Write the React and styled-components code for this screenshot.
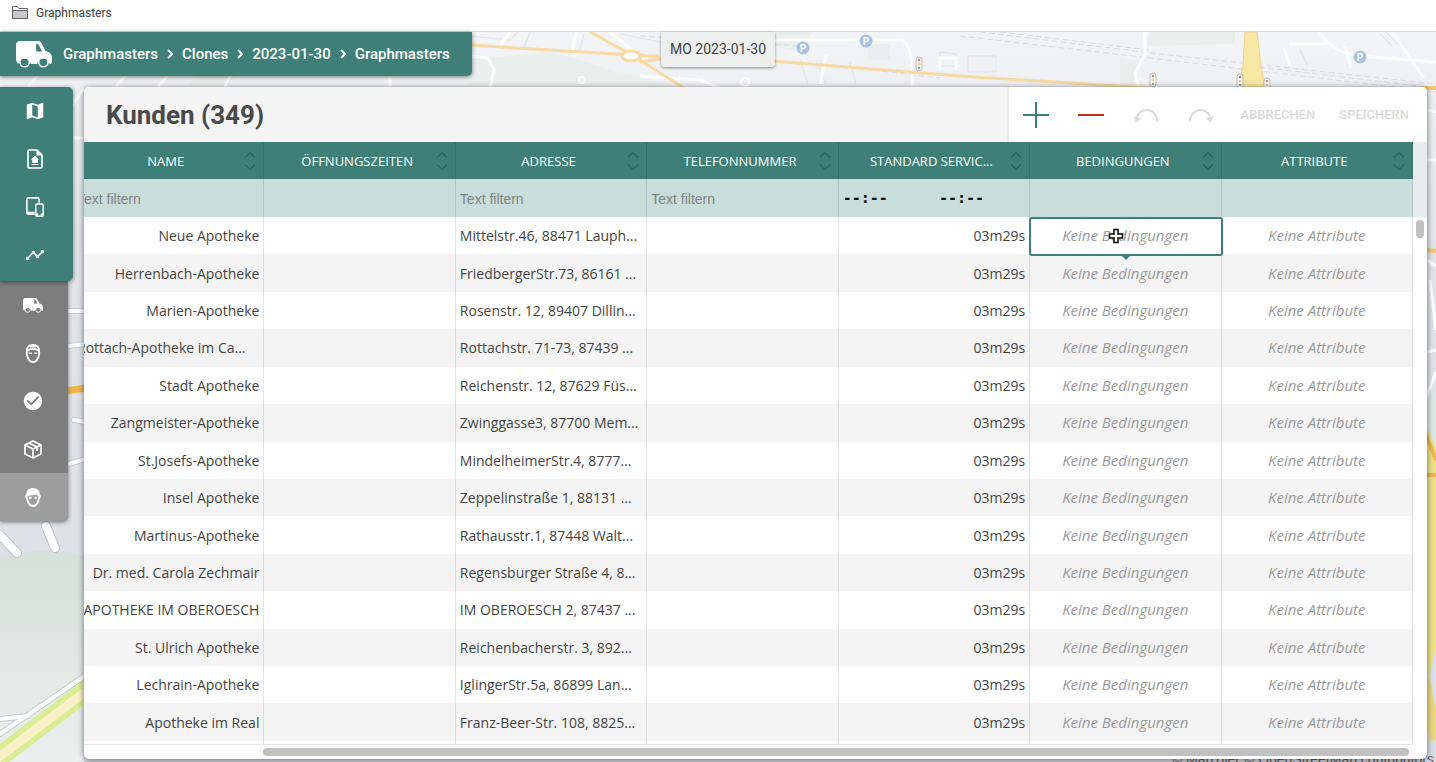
import React from 'react';
import styled, {createGlobalStyle, ThemeProvider} from 'styled-components';
import {MdCheckCircle, MdMap, MdTimeline} from 'react-icons/md';

const theme = {
	primary: '#3e8077',
	primaryLight: '#c9dedb',
	primaryDark: '#2c665e',
	danger: '#cf2a1e',
	text: '#444',
	muted: '#9b9b9b',
	disabled: '#dadada',
	stripe: '#f4f4f4',
	line: 'rgba(0, 0, 0, .1)',
	thumb: '#c1c1c1',
	roboto: 'Roboto, "Liberation Sans", sans-serif',
	openSans: '"Open Sans", "Noto Sans", sans-serif'
};

const GlobalStyle = createGlobalStyle`
	* {
		box-sizing: border-box;
	}

	body {
		margin: 0;
		font-family: ${theme.roboto};
		color: ${theme.text};
	}

	button, input {
		margin: 0;
		padding: 0;
		border: 0;
		background: none;
		font: inherit;
		color: inherit;
	}
`;

const Page = styled.div`
	display: flex;
	flex-direction: column;
	height: 100vh;
	overflow: hidden;
`;

const BookmarkBar = styled.nav`
	display: flex;
	align-items: center;
	height: 32px;
	padding: 0 12px 6px;
	background: #fff;
	border-bottom: 1px solid #d5dcda;
`;

const Bookmark = styled.a`
	display: flex;
	align-items: center;
	gap: 8px;
	font-size: 12px;
	color: #3c4043;
	text-decoration: none;
`;

const Workspace = styled.div`
	position: relative;
	flex: 1;
	min-height: 0;
	display: flex;
	flex-direction: column;
	gap: 11px;
	isolation: isolate;
`;

const MapCanvas = styled.svg`
	position: absolute;
	inset: 0;
	z-index: -1;
	width: 100%;
	height: 100%;
`;

const MapCredits = styled.small`
	position: absolute;
	right: 2px;
	bottom: -5px;
	z-index: -1;
	font: 14px "Liberation Sans", sans-serif;
	color: #666;
`;

const TopBar = styled.header`
	display: grid;
	grid-template-columns: 1fr auto 1fr;
	align-items: start;
	height: 44px;
`;

const Breadcrumb = styled.nav`
	justify-self: start;
	display: flex;
	align-items: center;
	gap: 9px;
	height: 44px;
	padding: 0 22px 0 16px;
	border-radius: 0 0 5px 0;
	background: ${props => props.theme.primary};
	box-shadow: 0 1px 4px rgba(0, 0, 0, .5);
	color: #fff;
`;

const Crumb = styled.a`
	font-size: 15px;
	font-weight: 500;
	color: inherit;
	text-decoration: none;
`;

const HomeLink = styled.a`
	display: flex;
	margin-right: 2px;
	color: inherit;
`;

const DateChip = styled.button`
	height: 35px;
	padding: 0 9px 1px;
	border-radius: 0 0 4px 4px;
	background: rgba(237, 238, 238, .95);
	box-shadow: 0 1px 3px rgba(0, 0, 0, .45);
	font-size: 14px;
	color: #444;
`;

const Main = styled.div`
	flex: 1;
	min-height: 0;
	display: flex;
	align-items: flex-start;
	gap: 11px;
	padding: 0 9px 3px 0;
`;

const Sidebar = styled.aside`
	width: 73px;
`;

const NavGroup = styled.nav`
	position: relative;
	z-index: ${props => props.$primary ? 1 : 0};
	width: ${props => props.$primary ? '73px' : '68px'};
	padding-bottom: ${props => props.$primary ? '2px' : '0'};
	border-radius: ${props => props.$primary ? '0 5px 5px 0' : '0 0 5px 0'};
	overflow: hidden;
	background: ${props => props.$primary ? props.theme.primary : '#7d7d7d'};
	box-shadow: 0 1px 4px rgba(0, 0, 0, .5);
`;

const NavItem = styled.a`
	display: flex;
	align-items: center;
	justify-content: center;
	height: 48px;
	padding-right: 3px;
	background: ${props => props.$active ? '#9d9d9d' : 'transparent'};
	color: #fff;
`;

const Card = styled.section`
	flex: 1;
	min-width: 0;
	align-self: stretch;
	display: flex;
	flex-direction: column;
	border-radius: 5px;
	overflow: hidden;
	background: #fff;
	box-shadow: 0 1px 6px rgba(0, 0, 0, .55);
`;

const CardHeader = styled.div`
	display: flex;
	justify-content: space-between;
	height: 55px;
	background: ${props => props.theme.stripe};
`;

const Title = styled.h1`
	margin: 0;
	padding-left: 22px;
	font-size: 26px;
	line-height: 56px;
	font-weight: 700;
	color: #4a4a4a;
`;

const Toolbar = styled.div`
	display: flex;
	align-items: center;
	gap: 24px;
	padding: 0 18px 0 11px;
	border-left: 2px solid #ececec;
	background: #fff;
`;

const ToolGroup = styled.div`
	display: flex;
	gap: 23px;
`;

const ToolButton = styled.button`
	display: flex;
	align-items: center;
	justify-content: center;
	width: 32px;
	height: 32px;
	color: ${props => props.theme[props.$color]};
`;

const TextButton = styled.button`
	font-size: 13px;
	font-weight: 500;
	color: ${props => props.theme.disabled};
`;

const TableArea = styled.div`
	flex: 1;
	min-height: 0;
	display: grid;
	grid-template-columns: 1fr 14px;
	grid-template-rows: 1fr 14px;
`;

const TableViewport = styled.div`
	display: flex;
	justify-content: flex-end;
	min-width: 0;
	overflow: hidden;
	border-bottom: 1px solid #e8e8e8;
`;

// wider than the viewport, so the first column is scrolled partly out of view
const Table = styled.table`
	flex: none;
	width: calc(100% + 11px);
	height: 100%;
	table-layout: fixed;
	border-collapse: separate;
	border-spacing: 0;
	font-family: ${props => props.theme.openSans};
	font-size: 14px;
`;

const HeadCell = styled.th`
	height: 37px;
	padding: 0;
	background: ${props => props.theme.primary};
	border-right: 1px solid ${props => props.theme.line};
	color: #fff;
`;

const SortButton = styled.button`
	display: flex;
	align-items: center;
	width: 100%;
	padding: 0 7px 0 14px;
	font-size: 13px;
	font-weight: 500;
`;

const SortLabel = styled.span`
	flex: 1;
	white-space: nowrap;
`;

const SortIcon = styled.svg`
	flex: none;
	color: ${props => props.theme.primaryDark};
`;

const FilterCell = styled.td`
	height: 38px;
	padding: 0 0 0 4px;
	background: ${props => props.theme.primaryLight};
	border-right: 1px solid ${props => props.theme.line};
`;

const FilterInput = styled.input`
	width: 100%;
	font-family: "Liberation Sans", Arial, sans-serif;
	font-size: 14px;
	outline: none;

	&::placeholder {
		color: #7d8483;
		opacity: 1;
	}
`;

const TimeRange = styled.div`
	display: grid;
	grid-template-columns: 1fr 1fr;
	gap: 6px;
`;

const TimeInput = styled(FilterInput)`
	font-family: "DejaVu Sans Mono", monospace;
	font-size: 15px;
	font-weight: 700;

	&::placeholder {
		color: #111;
	}
`;

const Row = styled.tr`
	background: #fff;

	&:nth-child(even) {
		background: ${props => props.theme.stripe};
	}
`;

const Cell = styled.td`
	position: relative;
	padding: 0 4px;
	border-right: 1px solid ${props => props.theme.line};
	text-align: ${props => props.$align || 'left'};
	white-space: nowrap;
`;

const EmptyCell = styled(Cell)`
	line-height: 19px;
	font-size: 15px;
	font-style: italic;
	text-align: center;
	color: ${props => props.theme.muted};
`;

const SpareCell = styled.td`
	height: 3px;
	padding: 0;
	border-right: 1px solid ${props => props.theme.line};
`;

const Selection = styled.span`
	position: absolute;
	inset: 0 -2px -2px -1px;
	z-index: 1;
	border: 2px solid ${props => props.theme.primary};
	border-radius: 3px;

	&::after {
		content: '';
		position: absolute;
		top: 100%;
		left: 50%;
		margin-left: -6px;
		border: 6px solid transparent;
		border-bottom-width: 0;
		border-top-color: ${props => props.theme.primary};
	}
`;

const Cursor = styled.svg`
	position: absolute;
	top: 50%;
	left: 50%;
	z-index: 2;
	margin: -8px 0 0 -17px;
`;

const VerticalTrack = styled.div`
	padding: 78px 3px 0;
	background: linear-gradient(#e9ecec 75px, #fff 75px);
`;

const VerticalThumb = styled.div`
	height: 18px;
	border-radius: 4px;
	background: ${props => props.theme.thumb};
`;

const HorizontalTrack = styled.div`
	padding: 3px 4px 3px 13.5%;
`;

const HorizontalThumb = styled.div`
	height: 8px;
	border-radius: 4px;
	background: ${props => props.theme.thumb};
`;

const VanIcon = ({size}) => (
	<svg width={size} height={Math.round(size * 0.75)} viewBox="0 0 36 27" fill="currentColor">
		<path fillRule="evenodd" d="M4 0h17.500c2 0 3.200.7 4.200 2.500L29.500 10c4 .7 6.500 3 6.500 7v4c0 1.200-.7 2-2 2h-.4a6.300 6.300 0 0 0-12.400 0h-6.400a6.300 6.300 0 0 0-12.400 0C1 22 0 20 0 17V4.500C0 1.500 1.500 0 4 0zM20.200 3v6.200c0 .8.400 1.200 1.200 1.200h4.800L22.500 3.600c-.3-.500-.7-.8-1.300-.8-.7 0-1 0-1 .2z"/>
		<circle cx="8.600" cy="21" r="4.700" fill="none" stroke="currentColor" strokeWidth="1.600"/>
		<circle cx="27.400" cy="21" r="4.700" fill="none" stroke="currentColor" strokeWidth="1.600"/>
	</svg>
);

const FolderIcon = () => (
	<svg width="16" height="13" viewBox="0 0 16 13" fill="none" stroke="#5f6368">
		<path d="M.5 12.500V.5h5l1.500 2h8.500v10z" fill="#fff"/>
		<path d="M.5 4.500h15v8H.5z" fill="#c8c8c8"/>
	</svg>
);

const DepotIcon = () => (
	<svg width="16" height="20" viewBox="0 0 16 20">
		<path d="M2.500 1h7.300L15 6.200v11.300c0 .9-.6 1.500-1.500 1.500h-11C1.600 19 1 18.400 1 17.500v-15C1 1.600 1.600 1 2.500 1z" fill="none" stroke="#fff" strokeWidth="1.700"/>
		<path d="M9.500 1v5.500H15z" fill="#fff"/>
		<path d="M8 6.800l4 3.700h-1.200V14H5.200v-3.500H4zM4.500 15h7v1h-7z" fill="#fff"/>
	</svg>
);

const DevicesIcon = () => (
	<svg width="18" height="20" viewBox="0 0 18 20" fill="none" stroke="#fff">
		<path d="M8.500 17.200H2.300c-.8 0-1.400-.6-1.400-1.400V2.200C.9 1.400 1.500.9 2.300.9h9.400c.8 0 1.400.5 1.400 1.300v3.500" strokeWidth="1.600"/>
		<path d="M1 15.800h7.500" strokeWidth="2.200"/>
		<rect x="9.800" y="7" width="7.400" height="12.200" rx="1.200" strokeWidth="1.500"/>
		<path d="M10 17.500h2.300m2.400 0H17" strokeWidth="2"/>
	</svg>
);

const DriverIcon = () => (
	<svg width="16" height="19" viewBox="0 0 16 19">
		<path d="M2.200 6.500C1.500 3 4 1 8 1s6.500 2 5.800 5.500c.5 1 .7 2.300.3 3.800C13.300 14.800 11 18 8 18s-5.300-3.200-6.100-7.700c-.4-1.500-.2-2.800.3-3.800z" fill="none" stroke="#fff" strokeWidth="1.900"/>
		<path d="M2 7c2-1.700 4-2.200 6-2.200S12 5.300 14 7" fill="none" stroke="#fff" strokeWidth="1.700"/>
		<path d="M5 2h6v1.500H5zM3.800 8.600h2.900V10H3.800zm5.500 0h2.900V10H9.300z" fill="#fff"/>
	</svg>
);

const CustomerIcon = () => (
	<svg width="16" height="19" viewBox="0 0 16 19">
		<path d="M2.200 6.500C2 2.700 4.500 1 8 1s6 1.700 5.800 5.500c1.100.7 1 2.800 0 4.500C13 15 11 18 8 18s-5-3-5.800-7c-1-1.700-1.100-3.800 0-4.500z" fill="none" stroke="#fff" strokeWidth="1.900"/>
		<path d="M2 8.500C1.500 3 4 1 8 1s6.500 2 6 7.500c-1.300-.3-2-1.200-2.300-2.200C9.500 7.500 5 7.300 2 8.500z" fill="#fff"/>
		<circle cx="5.300" cy="9.800" r="1.300" fill="#fff"/>
		<circle cx="10.700" cy="9.800" r="1.300" fill="#fff"/>
	</svg>
);

const PackageIcon = () => (
	<svg width="18" height="19" viewBox="0 0 18 19" fill="none" stroke="#fff" strokeWidth="1.700" strokeLinejoin="round">
		<path d="M9 1l8 4v9l-8 4-8-4V5z"/>
		<path d="M1 5l8 4 8-4M9 9v9M5 3l8 4v4"/>
	</svg>
);

const UndoIcon = ({flip}) => (
	<svg width="26" height="16" viewBox="0 0 26 16">
		<g transform={flip ? 'matrix(-1 0 0 1 26 0)' : undefined}>
			<path d="M4 9.500a10.400 10.400 0 0 1 20 4.500" fill="none" stroke="currentColor" strokeWidth="2"/>
			<path d="M.5 9l8 2.500L3 15.500z" fill="currentColor"/>
		</g>
	</svg>
);

const CrumbChevron = () => (
	<svg width="6" height="10" viewBox="0 0 6 10" fill="none" stroke="currentColor" strokeWidth="2">
		<path d="M1 1l4 4-4 4"/>
	</svg>
);

const parkings = [[803, 48], [866, 41], [1360, 57]];
const trafficLights = [[1153, 80], [1240, 81], [1267, 85], [919, 64]];

const CityMap = () => (
	<MapCanvas viewBox="0 32 1436 730" preserveAspectRatio="none" aria-hidden="true" fill="none">
		<defs>
			<linearGradient id="ground" x1="0" y1="0" x2="0" y2="1">
				<stop offset="0" stopColor="#f3f4f6"/>
				<stop offset=".3" stopColor="#e2e5ea"/>
				<stop offset="1" stopColor="#dadee5"/>
			</linearGradient>
			<linearGradient id="park" x1="0" y1="0" x2="0" y2="1">
				<stop offset="0" stopColor="#d4e0da"/>
				<stop offset="1" stopColor="#ebefee"/>
			</linearGradient>
		</defs>
		<path d="M0 32h1436v730H0z" fill="url(#ground)"/>
		<path d="M0 558q50-14 84-1v205H0z" fill="url(#park)"/>
		<path d="M195 76h40l-10 12h-38zM468 60l85-8 65 20 60 15H468zM772 32h40l-8 20-32-6zM868 44h22v16h-22zM1150 32h85v12l-90 2zM1120 58l20 4-8 26h-12z" fill="#e9efec"/>
		<path d="M1425 380l11 20v70l-11 30z" fill="#dbe7e3"/>
		<g stroke="#d6dce8" strokeDasharray="6 3">
			<path d="M960 36l190 22 286 34M980 32l180 22 276 30M1000 32l150 18M1250 66l186 22M640 36l160 10M820 64l120 14"/>
		</g>
		<g stroke="#dfe3ec">
			<path d="M470 36l40 4 8-8M530 32l-6 16 50 4M580 50l4-16M620 34l60 12M800 60l8 24M816 60l10 24M850 62l6 22M940 52v14h16V54zM968 56h28v16h-28zM1380 34l12 12M1386 32l16 16M1300 50l8 16"/>
		</g>
		<g stroke="#fff" strokeWidth="3">
			<path d="M28 87l10-12M116 87l10-12M158 87l10-12M225 87l5-12M390 76v11M470 56l18 2 6 12-4 18M500 46l10-14M572 52l4-20M610 32l22 18M820 84l6-30M772 40h130q12 6 10 48M940 70v-12h16v12M1145 32v22l-10 20 4 14M1320 32q10 20 40 24l76 6M1345 46l6 22M1392 32l32 46M1284 48l6 18M1290 44h40M84 88l-12 18M72 138h12M640 76l60 4 20 8"/>
			<path d="M1428 110l8 2M1427 160h9M1427 260l9 6M1427 352l9-2M1430 280l6 50M1436 372l-10 26"/>
			<circle cx="745" cy="82" r="4" strokeWidth="2"/>
			<circle cx="582" cy="80" r="3" strokeWidth="2"/>
		</g>
		<g stroke="#f8d9a4" strokeWidth="3">
			<path d="M469 45l180 11h10M590 32l40 22 54 34M760 60l200 16 190 12M640 62l26-4"/>
			<ellipse cx="631" cy="56" rx="9" ry="5" fill="#fff"/>
		</g>
		<path d="M1245 32h12l4 34 4 22h-26l4-24z" fill="#f6e7a4" stroke="#f3d28b"/>
		<g strokeLinecap="round">
			<path d="M0 535l17 18M46 526l9 22" stroke="#bdc1c8" strokeWidth="10"/>
			<path d="M0 535l17 18M46 526l9 22" stroke="#fff" strokeWidth="8"/>
			<path d="M68 311h18M68 346l18-2M68 464l18-5M74 420l12 2" stroke="#c8ccd3" strokeWidth="6"/>
			<path d="M68 311h18M68 346l18-2M68 464l18-5M74 420l12 2" stroke="#fff" strokeWidth="4"/>
			<path d="M66 391l20-3" stroke="#f0b64f" strokeWidth="7"/>
			<path d="M0 719l28-3M0 734l86-59" stroke="#c4cbcb" strokeWidth="6"/>
			<path d="M0 719l28-3M0 734l86-59" stroke="#fff" strokeWidth="4"/>
			<path d="M-6 761l96-73" stroke="#daed94" strokeWidth="20"/>
			<path d="M-6 761l96-73" stroke="#f8f0c6" strokeWidth="9"/>
		</g>
		<path d="M1424 250l12 1M1422 88h14" stroke="#f2c46f" strokeWidth="4"/>
		<path d="M1424 420l12 28v200l-12 50z" fill="#ece38a"/>
		<path d="M1424 430l12 30M1424 475h12" stroke="#f2b653" strokeWidth="4"/>
		<path d="M1424 680l12 60" stroke="#ead982" strokeWidth="12"/>
		{parkings.map(([x, y]) => (
			<g key={x}>
				<circle cx={x} cy={y} r="6.500" fill="#a9c1e2"/>
				<text x={x} y={y + 4} textAnchor="middle" fontFamily="Roboto, sans-serif" fontSize="10" fontWeight="700" fill="#fff">P</text>
			</g>
		))}
		{trafficLights.map(([x, y]) => (
			<g key={x}>
				<rect x={x - 3} y={y - 7} width="6" height="14" rx="3" fill="#fff" stroke="#bbb"/>
				<circle cx={x} cy={y - 4} r="1.300" fill="#d98a7d"/>
				<circle cx={x} cy={y} r="1.300" fill="#efc56e"/>
				<circle cx={x} cy={y + 4} r="1.300" fill="#7db79c"/>
			</g>
		))}
	</MapCanvas>
);

const columns = [
	{label: 'NAME', filter: 'text'},
	{label: 'ÖFFNUNGSZEITEN'},
	{label: 'ADRESSE', filter: 'text'},
	{label: 'TELEFONNUMMER', filter: 'text'},
	{label: 'STANDARD SERVIC...', filter: 'time'},
	{label: 'BEDINGUNGEN'},
	{label: 'ATTRIBUTE'}
];

const customers = [
	{name: 'Neue Apotheke', address: 'Mittelstr.46, 88471 Lauph...', selected: true},
	{name: 'Herrenbach-Apotheke', address: 'FriedbergerStr.73, 86161 ...'},
	{name: 'Marien-Apotheke', address: 'Rosenstr. 12, 89407 Dillin...'},
	{name: 'Rottach-Apotheke im Ca...', address: 'Rottachstr. 71-73, 87439 ...', cut: true},
	{name: 'Stadt Apotheke', address: 'Reichenstr. 12, 87629 Füs...'},
	{name: 'Zangmeister-Apotheke', address: 'Zwinggasse3, 87700 Mem...'},
	{name: 'St.Josefs-Apotheke', address: 'MindelheimerStr.4, 8777...'},
	{name: 'Insel Apotheke', address: 'Zeppelinstraße 1, 88131 ...'},
	{name: 'Martinus-Apotheke', address: 'Rathausstr.1, 87448 Walt...'},
	{name: 'Dr. med. Carola Zechmair', address: 'Regensburger Straße 4, 8...'},
	{name: 'APOTHEKE IM OBEROESCH', address: 'IM OBEROESCH 2, 87437 ...'},
	{name: 'St. Ulrich Apotheke', address: 'Reichenbacherstr. 3, 892...'},
	{name: 'Lechrain-Apotheke', address: 'IglingerStr.5a, 86899 Lan...'},
	{name: 'Apotheke im Real', address: 'Franz-Beer-Str. 108, 8825...'}
];

const crumbs = ['Graphmasters', 'Clones', '2023-01-30', 'Graphmasters'];

class CustomerTable extends React.Component {
	renderFilter({label, filter}) {
		switch (filter) {
			case 'text':
				return <FilterInput type="text" placeholder="Text filtern" aria-label={label}/>;
			case 'time':
				return (
					<TimeRange>
						<TimeInput type="text" placeholder="--:--" aria-label="Von"/>
						<TimeInput type="text" placeholder="--:--" aria-label="Bis"/>
					</TimeRange>
				);
			default:
				return null;
		}
	}

	renderCustomer({name, address, selected, cut}) {
		return (
			<Row key={name}>
				<Cell $align={cut ? 'left' : 'right'}>{name}</Cell>
				<Cell/>
				<Cell>{address}</Cell>
				<Cell/>
				<Cell $align="right">03m29s</Cell>
				<EmptyCell>
					Keine Bedingungen
					{selected && <Selection/>}
					{selected && (
						<Cursor width="16" height="16" viewBox="0 0 16 16">
							<path d="M5 .5h6V5h4.500v6H11v4.500H5V11H.5V5H5z" fill="#fff"/>
							<path d="M6 1.500h4V6h4.500v4H10v4.500H6V10H1.500V6H6z" fill="#fff" stroke="#000" strokeWidth="1.500"/>
						</Cursor>
					)}
				</EmptyCell>
				<EmptyCell>Keine Attribute</EmptyCell>
			</Row>
		);
	}

	render() {
		return (
			<TableArea>
				<TableViewport>
					<Table>
						<thead>
							<tr>
								{columns.map(({label}) => (
									<HeadCell key={label} scope="col">
										<SortButton type="button">
											<SortLabel>{label}</SortLabel>
											<SortIcon width="12" height="20" viewBox="0 0 12 20" fill="none" stroke="currentColor" strokeWidth="1.500">
												<path d="M1 6.500l5-5 5 5M1 13.500l5 5 5-5"/>
											</SortIcon>
										</SortButton>
									</HeadCell>
								))}
							</tr>
							<tr>
								{columns.map(column => (
									<FilterCell key={column.label}>{this.renderFilter(column)}</FilterCell>
								))}
							</tr>
						</thead>
						<tbody>
							{customers.map(this.renderCustomer)}
						</tbody>
						<tfoot>
							<tr>
								{columns.map(({label}) => <SpareCell key={label}/>)}
							</tr>
						</tfoot>
					</Table>
				</TableViewport>
				<VerticalTrack>
					<VerticalThumb/>
				</VerticalTrack>
				<HorizontalTrack>
					<HorizontalThumb/>
				</HorizontalTrack>
			</TableArea>
		);
	}
}

const App = () => (
	<ThemeProvider theme={theme}>
		<GlobalStyle/>
		<Page>
			<BookmarkBar>
				<Bookmark href="#bookmarks"><FolderIcon/>Graphmasters</Bookmark>
			</BookmarkBar>
			<Workspace>
				<CityMap/>
				<MapCredits>© MapTiler © OpenStreetMap contributors</MapCredits>
				<TopBar>
					<Breadcrumb>
						<HomeLink href="#home" aria-label="Start"><VanIcon size={36}/></HomeLink>
						{crumbs.map((crumb, index) => (
							<React.Fragment key={index}>
								{index > 0 && <CrumbChevron/>}
								<Crumb href={`#crumb-${index}`}>{crumb}</Crumb>
							</React.Fragment>
						))}
					</Breadcrumb>
					<DateChip type="button">MO 2023-01-30</DateChip>
				</TopBar>
				<Main>
					<Sidebar>
						<NavGroup $primary>
							<NavItem href="#karte" aria-label="Karte"><MdMap size={22}/></NavItem>
							<NavItem href="#depot" aria-label="Depot"><DepotIcon/></NavItem>
							<NavItem href="#geraete" aria-label="Geräte"><DevicesIcon/></NavItem>
							<NavItem href="#statistik" aria-label="Statistik"><MdTimeline size={20}/></NavItem>
						</NavGroup>
						<NavGroup>
							<NavItem href="#fahrzeuge" aria-label="Fahrzeuge"><VanIcon size={20}/></NavItem>
							<NavItem href="#fahrer" aria-label="Fahrer"><DriverIcon/></NavItem>
							<NavItem href="#auftraege" aria-label="Aufträge"><MdCheckCircle size={22}/></NavItem>
							<NavItem href="#pakete" aria-label="Pakete"><PackageIcon/></NavItem>
							<NavItem href="#kunden" aria-label="Kunden" $active><CustomerIcon/></NavItem>
						</NavGroup>
					</Sidebar>
					<Card>
						<CardHeader>
							<Title>Kunden (349)</Title>
							<Toolbar>
								<ToolGroup>
									<ToolButton type="button" aria-label="Hinzufügen" $color="primary">
										<svg width="26" height="26" viewBox="0 0 26 26" stroke="currentColor" strokeWidth="2"><path d="M13 0v26M0 13h26"/></svg>
									</ToolButton>
									<ToolButton type="button" aria-label="Entfernen" $color="danger">
										<svg width="26" height="26" viewBox="0 0 26 26" stroke="currentColor" strokeWidth="2"><path d="M0 13h26"/></svg>
									</ToolButton>
									<ToolButton type="button" aria-label="Rückgängig" $color="disabled"><UndoIcon/></ToolButton>
									<ToolButton type="button" aria-label="Wiederholen" $color="disabled"><UndoIcon flip/></ToolButton>
								</ToolGroup>
								<TextButton type="button">ABBRECHEN</TextButton>
								<TextButton type="button">SPEICHERN</TextButton>
							</Toolbar>
						</CardHeader>
						<CustomerTable/>
					</Card>
				</Main>
			</Workspace>
		</Page>
	</ThemeProvider>
);

export default App;
